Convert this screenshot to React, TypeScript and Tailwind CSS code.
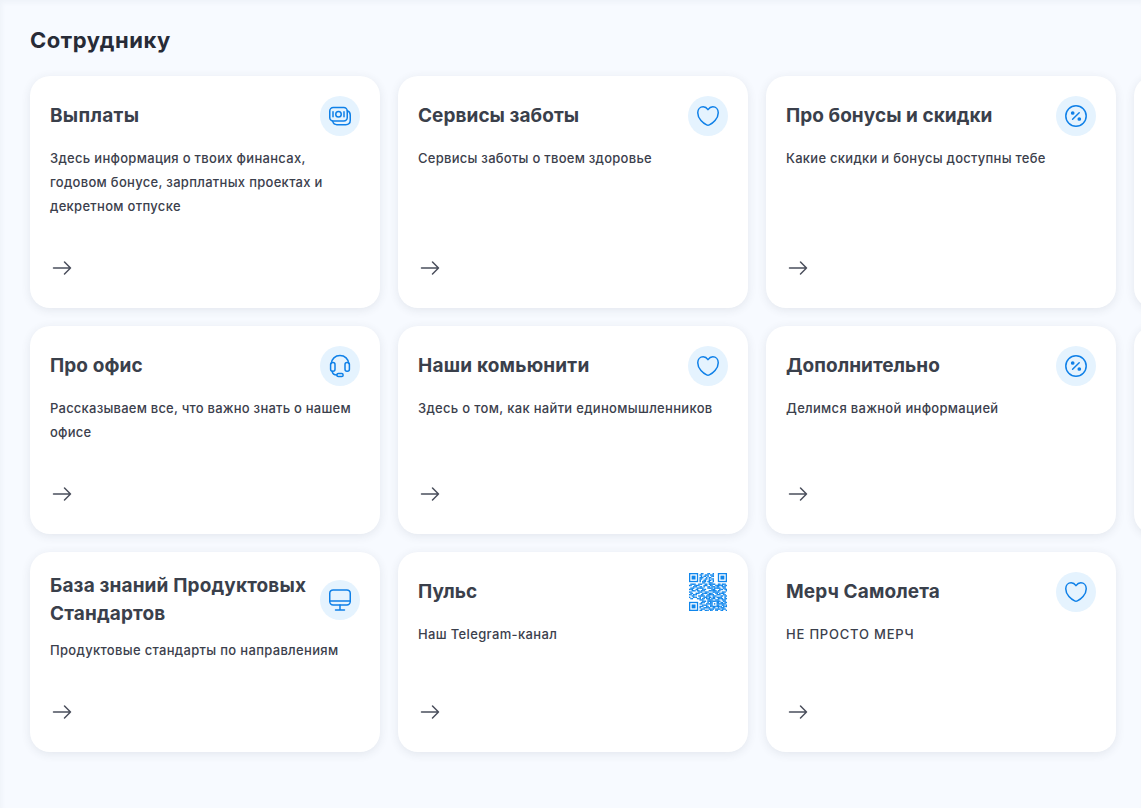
import type { ReactNode } from "react";

type CardData = {
  title: string;
  titleClass: string;
  text: string;
  textClass: string;
  icon: ReactNode;
};

const Svg = ({ children }: { children: ReactNode }) => (
  <svg
    width="24"
    height="24"
    viewBox="0 0 24 24"
    fill="none"
    stroke="currentColor"
    strokeWidth="1.5"
    strokeLinecap="round"
    strokeLinejoin="round"
  >
    {children}
  </svg>
);

const IconCircle = ({ children }: { children: ReactNode }) => (
  <div className="flex size-10 shrink-0 items-center justify-center rounded-full bg-[#e5f3fe] text-[#0f80e8]">
    <Svg>{children}</Svg>
  </div>
);

const MoneyIcon = () => (
  <IconCircle>
    <rect x="1.75" y="3.5" width="17.5" height="13.5" rx="3.5" />
    <circle cx="10.5" cy="10.3" r="2.75" />
    <path d="M5 7.8v5M16 7.8v5" />
    <path d="M4.75 17.4c.5 1.9 1.9 3.3 4.2 3.3h8.8c3 0 4.5-1.7 4.5-4.4V11c0-2.2-1-3.8-3-4.3" />
  </IconCircle>
);

const HeartIcon = () => (
  <IconCircle>
    <path d="M12 5.6C10.6 3.6 9 2.75 7.2 2.75c-3.1 0-5.45 2.5-5.45 5.9 0 6.2 5.6 10.6 8.9 12.2.9.5 1.8.5 2.7 0 3.3-1.6 8.9-6 8.9-12.2 0-3.4-2.35-5.9-5.45-5.9-1.8 0-3.4.85-4.8 2.85z" />
  </IconCircle>
);

const PercentIcon = () => (
  <IconCircle>
    <circle cx="12" cy="12" r="10.2" />
    <path d="M8.6 15.3l6.6-6.6" />
    <circle cx="8.7" cy="9" r="1.1" fill="currentColor" />
    <circle cx="15.3" cy="15" r="1.1" fill="currentColor" />
  </IconCircle>
);

const HeadsetIcon = () => (
  <IconCircle>
    <path d="M3.4 9.6C3.4 5 7.2 1.6 12 1.6S20.6 5 20.6 9.6" />
    <rect x="2.6" y="8.4" width="4.4" height="8.8" rx="2" />
    <rect x="17" y="8.4" width="4.4" height="8.8" rx="2" />
    <path d="M4.1 17.2c.4 2.5 2 3.9 4.8 3.9" />
    <rect x="8.9" y="19.6" width="6.2" height="2.9" rx="1.3" />
  </IconCircle>
);

const MonitorIcon = () => (
  <IconCircle>
    <rect x="1.75" y="1.9" width="20.5" height="15" rx="3.4" />
    <path d="M1.75 12.9h20.5M12 17v5M7.5 22h9" />
  </IconCircle>
);

const QR_ROWS = [
  "00000000011000110010000000000",
  "00000000110011101110000000000",
  "00000000010110100110000000000",
  "00000000111001011000000000000",
  "00000000110011010110000000000",
  "00000000100110011010000000000",
  "00000000101110110010000000000",
  "00000000001100011100000000000",
  "01111001110011011111001101110",
  "11001111000111001100111111011",
  "00011100110100110111011001110",
  "01110011111000111101111100110",
  "11100110001110000111000111011",
  "00111011011100011111101100001",
  "11000001110011100011111001110",
  "01100111001111011100110111100",
  "11011100011000111110011100110",
  "00110001111101110011100011011",
  "10011100100111011011011110010",
  "01100011101101110111001111011",
  "00000000111000111100111001110",
  "00000000001110111111111100110",
  "00000000011100101100011011011",
  "00000000110001111101011111110",
  "00000000001111001100011001101",
  "00000000111001101111111110111",
  "00000000100111110011001011100",
  "00000000011100011110111101110",
  "00000000110011101100110011001",
];

const QrCode = () => (
  <svg className="m-px size-[38px] shrink-0 text-[#0f86ec]" viewBox="0 0 29 29" fill="currentColor">
    {QR_ROWS.map((row, y) =>
      row
        .split("")
        .map((cell, x) => (cell === "1" ? <rect key={`${x}-${y}`} x={x} y={y} width="1.1" height="1.1" /> : null))
    )}
    {[[0, 0], [22, 0], [0, 22]].map(([x, y]) => (
      <g key={`${x}-${y}`}>
        <rect x={x + 0.5} y={y + 0.5} width="6" height="6" fill="none" stroke="currentColor" />
        <rect x={x + 2} y={y + 2} width="3" height="3" />
      </g>
    ))}
  </svg>
);

const rows: { height: string; cards: CardData[]; more: boolean }[] = [
  {
    height: "h-[232px]",
    more: true,
    cards: [
      {
        title: "Выплаты",
        titleClass: "tracking-[0.3px]",
        text: "Здесь информация о твоих финансах, годовом бонусе, зарплатных проектах и декретном отпуске",
        textClass: "w-[280px] tracking-[0.3px]",
        icon: <MoneyIcon />,
      },
      {
        title: "Сервисы заботы",
        titleClass: "tracking-[0.05px]",
        text: "Сервисы заботы о твоем здоровье",
        textClass: "tracking-[0.26px]",
        icon: <HeartIcon />,
      },
      {
        title: "Про бонусы и скидки",
        titleClass: "tracking-[0.05px]",
        text: "Какие скидки и бонусы доступны тебе",
        textClass: "tracking-[0.27px]",
        icon: <PercentIcon />,
      },
    ],
  },
  {
    height: "h-[208px]",
    more: true,
    cards: [
      {
        title: "Про офис",
        titleClass: "tracking-[0.1px]",
        text: "Рассказываем все, что важно знать о нашем офисе",
        textClass: "tracking-[0.23px]",
        icon: <HeadsetIcon />,
      },
      {
        title: "Наши комьюнити",
        titleClass: "tracking-[0.2px]",
        text: "Здесь о том, как найти единомышленников",
        textClass: "tracking-[0.31px]",
        icon: <HeartIcon />,
      },
      {
        title: "Дополнительно",
        titleClass: "tracking-[0.05px]",
        text: "Делимся важной информацией",
        textClass: "tracking-[0.3px]",
        icon: <PercentIcon />,
      },
    ],
  },
  {
    height: "h-[200px]",
    more: false,
    cards: [
      {
        title: "База знаний Продуктовых Стандартов",
        titleClass: "tracking-[0.15px]",
        text: "Продуктовые стандарты по направлениям",
        textClass: "tracking-[0.32px]",
        icon: <MonitorIcon />,
      },
      {
        title: "Пульс",
        titleClass: "tracking-[0.1px]",
        text: "Наш Telegram-канал",
        textClass: "tracking-[0.35px]",
        icon: <QrCode />,
      },
      {
        title: "Мерч Самолета",
        titleClass: "tracking-[0.1px]",
        text: "НЕ ПРОСТО МЕРЧ",
        textClass: "tracking-[0.8px]",
        icon: <HeartIcon />,
      },
    ],
  },
];

const Card = ({ title, titleClass, text, textClass, icon }: CardData) => (
  <div className="flex w-[350px] shrink-0 flex-col rounded-[20px] bg-white px-5 pt-5 pb-7 shadow-[0_2px_10px_rgba(50,60,80,0.1)]">
    <div className="flex items-center justify-between">
      <h3 className={`w-[270px] text-[19px] leading-7 font-bold text-[#3a404b] ${titleClass}`}>{title}</h3>
      {icon}
    </div>
    <p className={`mt-2.5 text-[13px] leading-6 font-medium text-[#3b404c] ${textClass}`}>{text}</p>
    <div className="mt-auto text-[#4a4f5c]">
      <Svg>
        <path d="M3.5 12h17M14.5 6l6 6-6 6" />
      </Svg>
    </div>
  </div>
);

const App = () => {
  return (
    <main className="h-[808px] w-[1141px] overflow-hidden bg-[#f7faff] px-[30px] pt-6 font-['Inter','Liberation_Sans',sans-serif] shadow-[inset_2px_3px_4px_rgba(60,70,90,0.04)]">
      <h2 className="mb-5 text-[22px] leading-8 font-bold tracking-[0.55px] text-[#272b37]">Сотруднику</h2>
      <div className="flex flex-col gap-[18px]">
        {rows.map((row, i) => (
          <div key={i} className={`flex gap-[18px] ${row.height}`}>
            {row.cards.map((card) => (
              <Card key={card.title} {...card} />
            ))}
            {row.more && (
              <div className="w-[350px] shrink-0 rounded-[20px] bg-white shadow-[0_2px_10px_rgba(50,60,80,0.1)]" />
            )}
          </div>
        ))}
      </div>
    </main>
  );
};

export default App;
